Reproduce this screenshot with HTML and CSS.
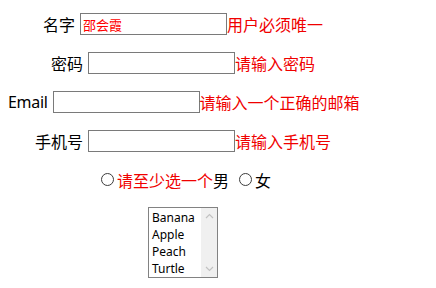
FILE: index.html
```html
<!DOCTYPE html>
<html lang="zh-CN">
<head>
<meta charset="utf-8">
<title>注册</title>
<link rel="stylesheet" href="styles.css">
</head>
<body>
<form class="form">
  <div class="row">
    <label class="label">名字</label><input class="field field-filled" type="text" value="邵会霞"><span class="err">用户必须唯一</span>
  </div>
  <div class="row">
    <label class="label">密码</label><input class="field" type="password"><span class="err">请输入密码</span>
  </div>
  <div class="row">
    <label class="label label-latin">Email</label><input class="field" type="text"><span class="err">请输入一个正确的邮箱</span>
  </div>
  <div class="row">
    <label class="label">手机号</label><input class="field" type="text"><span class="err">请输入手机号</span>
  </div>
  <div class="row row-radio">
    <input class="radio radio-first" type="radio" name="sex"><span class="err">请至少选一个</span><span class="opt">男</span><input class="radio radio-second" type="radio" name="sex"><span class="opt">女</span>
  </div>
  <div class="row row-list">
    <div class="listbox">
      <div class="options">
        <div class="option">Banana</div>
        <div class="option">Apple</div>
        <div class="option">Peach</div>
        <div class="option">Turtle</div>
      </div>
      <div class="scrollbar">
        <svg class="arrow" width="9" height="6" viewBox="0 0 9 6"><path d="M1 5 L4.5 1.5 L8 5" fill="none" stroke="#c2c2c2" stroke-width="1.2"/></svg>
        <svg class="arrow" width="9" height="6" viewBox="0 0 9 6"><path d="M1 1 L4.5 4.5 L8 1" fill="none" stroke="#c2c2c2" stroke-width="1.2"/></svg>
      </div>
    </div>
  </div>
</form>
</body>
</html>
```

FILE: styles.css
```css
html, body {
  margin: 0;
  padding: 0;
  background: #ffffff;
}

body {
  font-family: "Noto Sans", "Noto Sans CJK SC", sans-serif;
  font-size: 16px;
  color: #000000;
}

.form {
  width: 350px;
  margin-left: 8px;
  padding-top: 13px;
}

.row {
  display: flex;
  align-items: center;
  justify-content: safe center;
  height: 22px;
  margin-bottom: 17px;
  white-space: nowrap;
  line-height: 22px;
}

.label {
  margin-right: 5px;
  font-family: "Noto Sans CJK SC", sans-serif;
}

.label-latin {
  font-family: "Noto Sans", "Noto Sans CJK SC", sans-serif;
  letter-spacing: -0.3px;
}

.field {
  box-sizing: border-box;
  width: 147px;
  height: 22px;
  margin: 0;
  padding: 0 2px;
  border: 1px solid #7a7a7a;
  font-family: "Noto Sans CJK SC", sans-serif;
  font-size: 13px;
  color: #ff0000;
  background: #ffffff;
  outline: none;
}

.err {
  color: #f00000;
  font-family: "Noto Sans CJK SC", sans-serif;
}

.opt {
  font-family: "Noto Sans CJK SC", sans-serif;
}

.row-radio {
  margin-bottom: 16px;
}

.radio {
  appearance: none;
  -webkit-appearance: none;
  box-sizing: border-box;
  width: 13px;
  height: 13px;
  border: 1px solid #3c3c3c;
  border-radius: 50%;
  background: #ffffff;
  position: relative;
  top: -1px;
}

.radio-first {
  margin: 0 3px 0 6px;
}

.radio-second {
  margin: 0 3px 0 10px;
}

.row-list {
  height: auto;
  line-height: normal;
}

.listbox {
  box-sizing: border-box;
  width: 70px;
  height: 71px;
  border: 1px solid #828282;
  display: flex;
  background: #ffffff;
}

.options {
  flex: 1;
  padding: 1px 0 0 3px;
  font-family: "Noto Sans", sans-serif;
  font-size: 12px;
  line-height: 17px;
}

.scrollbar {
  width: 16px;
  background: #f0f0f0;
  display: flex;
  flex-direction: column;
  justify-content: space-between;
  align-items: center;
  padding: 5px 0;
}

.arrow {
  display: block;
}
```
